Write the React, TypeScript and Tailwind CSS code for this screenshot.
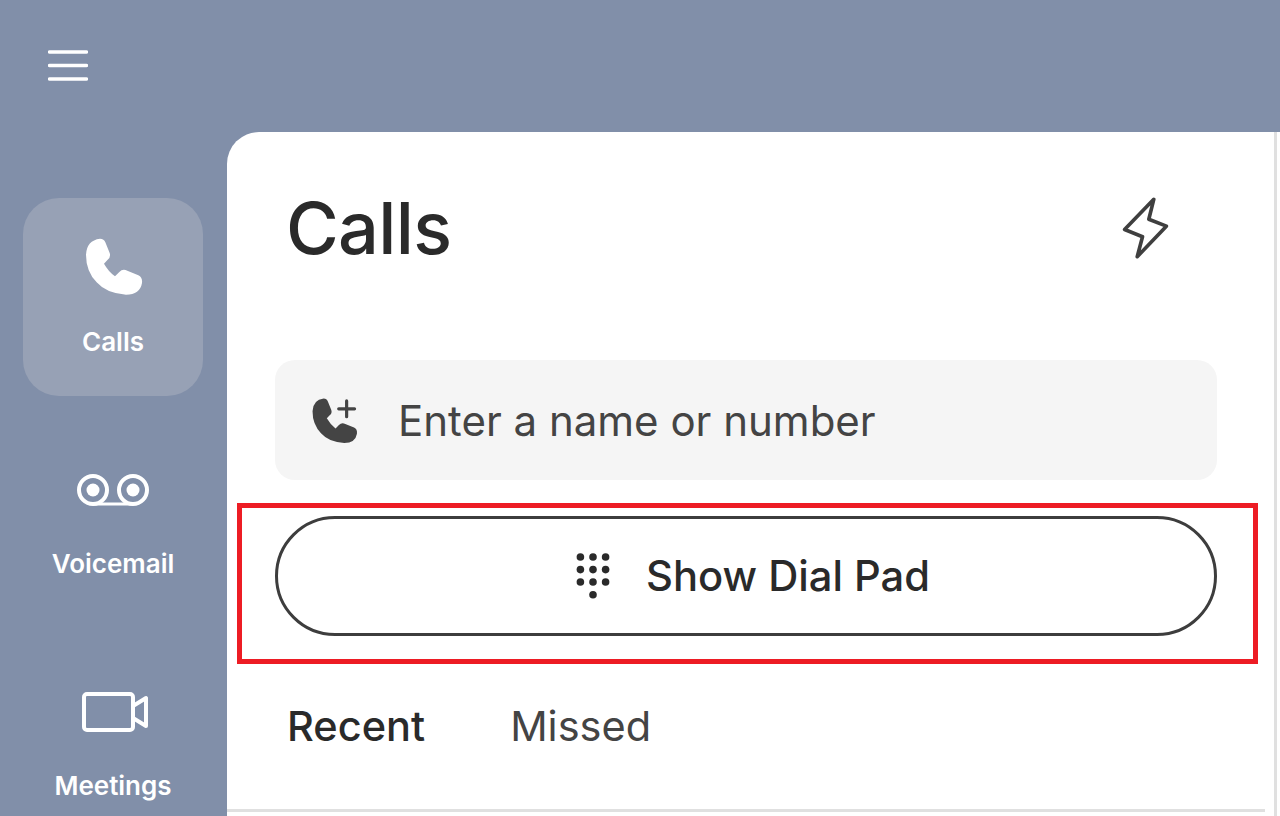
const handset =
    'M300 657 Q312 657 316 668 L329 700 Q333 712 323 720 L312 732 Q325 755 345 770 L358 757 Q368 746 382 753 L415 767 Q428 773 426 790 Q420 825 378 825 Q320 822 290 788 Q258 755 258 705 Q260 662 300 657 Z';

function MenuIcon() {
    return (
        <svg width="40" height="32" viewBox="0 0 40 32" fill="none" stroke="#ffffff" strokeWidth="3.4" strokeLinecap="round">
            <path d="M1.5 2 H38.5 M1.5 15.5 H38.5 M1.5 29 H38.5" />
        </svg>
    );
}

function PhoneIcon() {
    return (
        <svg className="ml-[2px]" width="58" height="58" viewBox="255 655 174 174" fill="#ffffff">
            <path d={handset} />
        </svg>
    );
}

function PhonePlusIcon() {
    return (
        <svg className="ml-px mt-[2px]" width="46" height="46" viewBox="256 655 174 174" fill="#444444">
            <path d={handset} />
            <path d="M387 666 V726 M357 696 H417" stroke="#444444" strokeWidth="12" strokeLinecap="round" />
        </svg>
    );
}

function VoicemailIcon() {
    return (
        <svg width="72" height="32" viewBox="0 0 72 32" fill="none" stroke="#ffffff" strokeWidth="4">
            <circle cx="16" cy="16" r="14" />
            <circle cx="56" cy="16" r="14" />
            <path d="M16 30 H56" strokeWidth="3" />
            <circle cx="16" cy="16" r="6.5" fill="#ffffff" stroke="none" />
            <circle cx="56" cy="16" r="6.5" fill="#ffffff" stroke="none" />
        </svg>
    );
}

function VideoIcon() {
    return (
        <svg className="ml-[4px]" width="66" height="40" viewBox="0 0 66 40" fill="none" stroke="#ffffff" strokeWidth="4" strokeLinejoin="round">
            <rect x="2" y="2" width="49" height="36" rx="3" />
            <path d="M51 14 L64 6 V34 L51 26" />
        </svg>
    );
}

function BoltIcon() {
    return (
        <svg width="47" height="62" viewBox="125 230 140 187" fill="none" stroke="#3f3f3f" strokeWidth="11" strokeLinejoin="round">
            <path d="M220 237 L205 297 L258 318 L170 410 L186 350 L132 328 Z" />
        </svg>
    );
}

function DialIcon() {
    const rows = [5, 17.6, 30, 42.7];
    const cols = [4.4, 17, 29.6];
    return (
        <svg width="34" height="48" viewBox="0 0 34 48" fill="#2a2a2a">
            {rows.slice(0, 3).map(y => cols.map(x => <circle key={`${x}-${y}`} cx={x} cy={y} r="3.8" />))}
            <circle cx={cols[1]} cy={rows[3]} r="3.8" />
        </svg>
    );
}

function NavItem({ label, active, icon, className = '' }: { label: string; active?: boolean; icon: React.ReactNode; className?: string }) {
    return (
        <div className={`w-[180px] h-[198px] shrink-0 rounded-[36px] flex flex-col items-center ${active ? 'bg-[#97a1b5]' : ''} ${className}`}>
            <div className="mt-[40px] h-[58px] flex items-center justify-center">{icon}</div>
            <span className={`${active ? 'mt-[32px]' : 'mt-[31px]'} text-[26px] leading-[28px] font-semibold text-white`}>{label}</span>
        </div>
    );
}

export default function App() {
    return (
        <div className="relative w-[1280px] h-[816px] overflow-hidden bg-[#818fa9] flex flex-col font-['Inter',sans-serif]">
            <header className="h-[132px] shrink-0 pl-[48px] pt-[50px]">
                <MenuIcon />
            </header>

            <div className="flex flex-1 min-h-0">
                <nav className="w-[227px] shrink-0 pl-[23px] pt-[66px] flex flex-col gap-[24px]">
                    <NavItem label="Calls" active icon={<PhoneIcon />} />
                    <NavItem label="Voicemail" className="mt-px" icon={<VoicemailIcon />} />
                    <NavItem label="Meetings" icon={<VideoIcon />} />
                </nav>

                <main className="flex-1 bg-white rounded-tl-[32px] pr-[3px]">
                    <div className="h-full border-r-[3px] border-[#e0e0e0] flex flex-col">
                        <div className="h-[228px] pl-[59px] pr-[105px] pt-[48px] flex justify-between items-start shrink-0">
                            <h1 className="text-[72px] leading-[96px] font-medium tracking-[-0.7px] text-[#2a2a2a]">Calls</h1>
                            <div className="pt-[17px]"><BoltIcon /></div>
                        </div>

                        <div className="ml-[48px] mr-[57px] h-[120px] rounded-[20px] bg-[#f5f5f5] flex items-center pl-[36px] gap-[40px] shrink-0">
                            <PhonePlusIcon />
                            <span className="pt-[2px] text-[42px] leading-[50px] text-[#444444]">Enter a name or number</span>
                        </div>

                        <button className="ml-[48px] mr-[57px] mt-[36px] h-[120px] pl-[14px] rounded-full border-[3px] border-[#3d3d3d] flex items-center justify-center gap-[36px] shrink-0">
                            <DialIcon />
                            <span className="text-[41.7px] leading-[50px] font-medium text-[#2a2a2a]">Show Dial Pad</span>
                        </button>

                        <div className="mt-[60px] pl-[60px] flex gap-[85px] items-center h-[60px] shrink-0">
                            <span className="text-[41.5px] leading-[50px] font-medium text-[#2a2a2a]">Recent</span>
                            <span className="text-[41.5px] leading-[50px] text-[#444444]">Missed</span>
                        </div>

                        <div className="mt-[53px] mr-[9px] h-[3px] bg-[#e0e0e0] shrink-0" />
                    </div>
                </main>
            </div>

            <div className="absolute left-[237px] top-[503px] w-[1021px] h-[161px] border-[5px] border-[#ed1c24]" />
        </div>
    );
}
